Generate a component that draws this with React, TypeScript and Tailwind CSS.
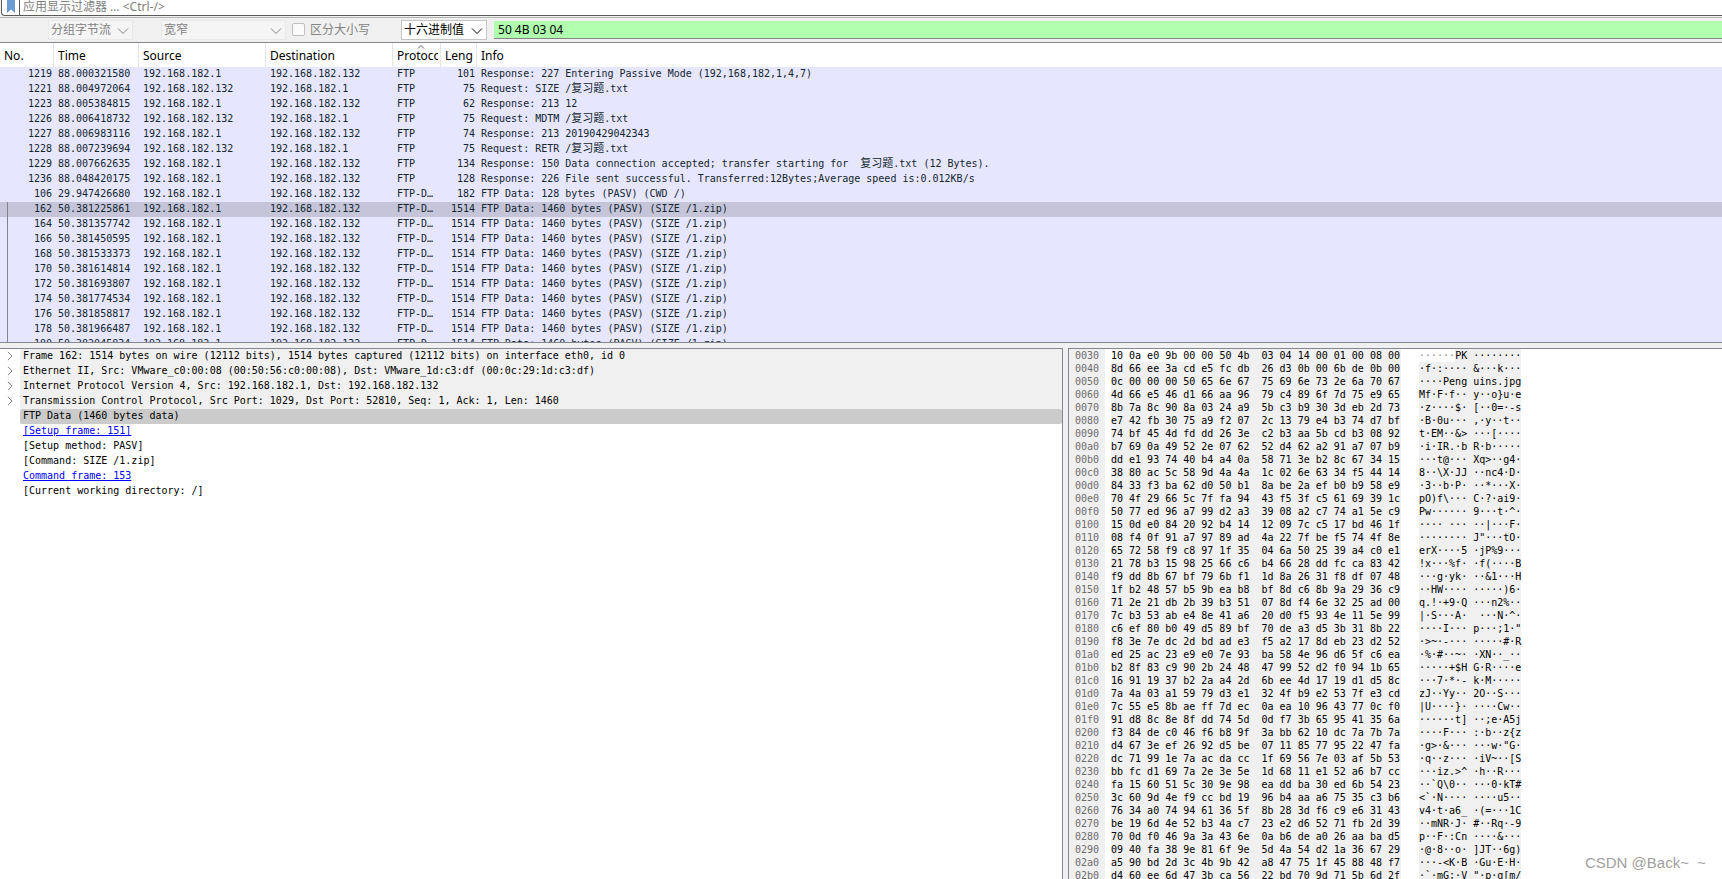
import React from 'react';
import { clsx } from 'clsx';

type Packet = [no: string, time: string, source: string, destination: string, protocol: string, length: string, info: string];

const HOST = '192.168.182.1';
const VM = '192.168.182.132';
const ZIP_INFO = 'FTP Data: 1460 bytes (PASV) (SIZE /1.zip)';

const packets: Packet[] = [
    ['1219', '88.000321580', HOST, VM, 'FTP', '101', 'Response: 227 Entering Passive Mode (192,168,182,1,4,7)'],
    ['1221', '88.004972064', VM, HOST, 'FTP', '75', 'Request: SIZE /复习题.txt'],
    ['1223', '88.005384815', HOST, VM, 'FTP', '62', 'Response: 213 12'],
    ['1226', '88.006418732', VM, HOST, 'FTP', '75', 'Request: MDTM /复习题.txt'],
    ['1227', '88.006983116', HOST, VM, 'FTP', '74', 'Response: 213 20190429042343'],
    ['1228', '88.007239694', VM, HOST, 'FTP', '75', 'Request: RETR /复习题.txt'],
    ['1229', '88.007662635', HOST, VM, 'FTP', '134', 'Response: 150 Data connection accepted; transfer starting for  复习题.txt (12 Bytes).'],
    ['1236', '88.048420175', HOST, VM, 'FTP', '128', 'Response: 226 File sent successful. Transferred:12Bytes;Average speed is:0.012KB/s'],
    ['106', '29.947426680', HOST, VM, 'FTP-D…', '182', 'FTP Data: 128 bytes (PASV) (CWD /)'],
    ['162', '50.381225861', HOST, VM, 'FTP-D…', '1514', ZIP_INFO],
    ['164', '50.381357742', HOST, VM, 'FTP-D…', '1514', ZIP_INFO],
    ['166', '50.381450595', HOST, VM, 'FTP-D…', '1514', ZIP_INFO],
    ['168', '50.381533373', HOST, VM, 'FTP-D…', '1514', ZIP_INFO],
    ['170', '50.381614814', HOST, VM, 'FTP-D…', '1514', ZIP_INFO],
    ['172', '50.381693807', HOST, VM, 'FTP-D…', '1514', ZIP_INFO],
    ['174', '50.381774534', HOST, VM, 'FTP-D…', '1514', ZIP_INFO],
    ['176', '50.381858817', HOST, VM, 'FTP-D…', '1514', ZIP_INFO],
    ['178', '50.381966487', HOST, VM, 'FTP-D…', '1514', ZIP_INFO],
    ['180', '50.382045834', HOST, VM, 'FTP-D…', '1514', ZIP_INFO],
];

const SELECTED = '162';

const columns = [
    { label: 'No.', width: 'w-[54px]' },
    { label: 'Time', width: 'w-[85px]' },
    { label: 'Source', width: 'w-[127px]' },
    { label: 'Destination', width: 'w-[127px]' },
    { label: 'Protoco', width: 'w-[48px]', sorted: true },
    { label: 'Leng', width: 'w-[36px]' },
    { label: 'Info', width: '' },
];

const layers = [
    'Frame 162: 1514 bytes on wire (12112 bits), 1514 bytes captured (12112 bits) on interface eth0, id 0',
    'Ethernet II, Src: VMware_c0:00:08 (00:50:56:c0:00:08), Dst: VMware_1d:c3:df (00:0c:29:1d:c3:df)',
    'Internet Protocol Version 4, Src: 192.168.182.1, Dst: 192.168.182.132',
    'Transmission Control Protocol, Src Port: 1029, Dst Port: 52810, Seq: 1, Ack: 1, Len: 1460',
];

const fields = [
    { text: '[Setup frame: 151]', link: true },
    { text: '[Setup method: PASV]' },
    { text: '[Command: SIZE /1.zip]' },
    { text: 'Command frame: 153', link: true },
    { text: '[Current working directory: /]' },
];

const FIRST_OFFSET = 0x30;
// the first bytes on screen still belong to the TCP header
const HEADER_BYTES = 6;

const dump = `
10 0a e0 9b 00 00 50 4b 03 04 14 00 01 00 08 00
8d 66 ee 3a cd e5 fc db 26 d3 0b 00 6b de 0b 00
0c 00 00 00 50 65 6e 67 75 69 6e 73 2e 6a 70 67
4d 66 e5 46 d1 66 aa 96 79 c4 89 6f 7d 75 e9 65
8b 7a 8c 90 8a 03 24 a9 5b c3 b9 30 3d eb 2d 73
e7 42 fb 30 75 a9 f2 07 2c 13 79 e4 b3 74 d7 bf
74 bf 45 4d fd dd 26 3e c2 b3 aa 5b cd b3 08 92
b7 69 0a 49 52 2e 07 62 52 d4 62 a2 91 a7 07 b9
dd e1 93 74 40 b4 a4 0a 58 71 3e b2 8c 67 34 15
38 80 ac 5c 58 9d 4a 4a 1c 02 6e 63 34 f5 44 14
84 33 f3 ba 62 d0 50 b1 8a be 2a ef b0 b9 58 e9
70 4f 29 66 5c 7f fa 94 43 f5 3f c5 61 69 39 1c
50 77 ed 96 a7 99 d2 a3 39 08 a2 c7 74 a1 5e c9
15 0d e0 84 20 92 b4 14 12 09 7c c5 17 bd 46 1f
08 f4 0f 91 a7 97 89 ad 4a 22 7f be f5 74 4f 8e
65 72 58 f9 c8 97 1f 35 04 6a 50 25 39 a4 c0 e1
21 78 b3 15 98 25 66 c6 b4 66 28 dd fc ca 83 42
f9 dd 8b 67 bf 79 6b f1 1d 8a 26 31 f8 df 07 48
1f b2 48 57 b5 9b ea b8 bf 8d c6 8b 9a 29 36 c9
71 2e 21 db 2b 39 b3 51 07 8d f4 6e 32 25 ad 00
7c b3 53 ab e4 8e 41 a6 20 d0 f5 93 4e 11 5e 99
c6 ef 80 b0 49 d5 89 bf 70 de a3 d5 3b 31 8b 22
f8 3e 7e dc 2d bd ad e3 f5 a2 17 8d eb 23 d2 52
ed 25 ac 23 e9 e0 7e 93 ba 58 4e 96 d6 5f c6 ea
b2 8f 83 c9 90 2b 24 48 47 99 52 d2 f0 94 1b 65
16 91 19 37 b2 2a a4 2d 6b ee 4d 17 19 d1 d5 8c
7a 4a 03 a1 59 79 d3 e1 32 4f b9 e2 53 7f e3 cd
7c 55 e5 8b ae ff 7d ec 0a ea 10 96 43 77 0c f0
91 d8 8c 8e 8f dd 74 5d 0d f7 3b 65 95 41 35 6a
f3 84 de c0 46 f6 b8 9f 3a bb 62 10 dc 7a 7b 7a
d4 67 3e ef 26 92 d5 be 07 11 85 77 95 22 47 fa
dc 71 99 1e 7a ac da cc 1f 69 56 7e 03 af 5b 53
bb fc d1 69 7a 2e 3e 5e 1d 68 11 e1 52 a6 b7 cc
fa 15 60 51 5c 30 9e 98 ea dd ba 30 ed 6b 54 23
3c 60 9d 4e f9 cc bd 19 96 b4 aa a6 75 35 c3 b6
76 34 a0 74 94 61 36 5f 8b 28 3d f6 c9 e6 31 43
be 19 6d 4e 52 b3 4a c7 23 e2 d6 52 71 fb 2d 39
70 0d f0 46 9a 3a 43 6e 0a b6 de a0 26 aa ba d5
09 40 fa 38 9e 81 6f 9e 5d 4a 54 d2 1a 36 67 29
a5 90 bd 2d 3c 4b 9b 42 a8 47 75 1f 45 88 48 f7
d4 60 ee 6d 47 3b ca 56 22 bd 70 9d 71 5b 6d 2f
`.trim().split('\n').map((line) => line.split(' '));

function toChar(byte: string) {
    const code = parseInt(byte, 16);
    return code >= 0x20 && code < 0x7f ? String.fromCharCode(code) : '·';
}

function Chevron({ className }: { className?: string }) {
    return (
        <svg viewBox="0 0 12 12" className={clsx('shrink-0', className)} fill="none" stroke="currentColor" aria-hidden="true">
            <path d="M1 3.5 L6 8.5 L11 3.5" />
        </svg>
    );
}

interface SearchSelectProps {
    label: string;
    value: string;
    className: string;
    disabled?: boolean;
}

function SearchSelect({ label, value, className, disabled }: SearchSelectProps) {
    return (
        <div
            className={clsx(
                'relative flex h-5 shrink-0 items-center border',
                disabled ? 'border-[#e9e9e9] bg-[#f5f5f5] text-[#838383]' : 'border-[#c4c4c4] bg-white text-black',
                className,
            )}
        >
            <select aria-label={label} disabled={disabled} className="h-full w-full appearance-none bg-transparent pl-[2px] text-xs opacity-100">
                <option>{value}</option>
            </select>
            <Chevron className="pointer-events-none absolute right-[3px] top-[4px] h-3 w-3" />
        </div>
    );
}

function FilterBar() {
    return (
        <div className="h-[18px] shrink-0 border-b border-[#b4b4b4] bg-[#f0f0f0] pl-px">
            <div className="flex h-4 items-start rounded-bl-sm border-b border-l border-[#5a5a5a] bg-white">
                <button type="button" aria-label="书签" className="flex h-[15px] w-[18px] shrink-0 justify-center border-r border-[#5a5a5a]">
                    <svg viewBox="0 0 8 13" className="h-[13px] w-2" aria-hidden="true">
                        <path d="M0 0 H8 V13 L4 9.5 L0 13 Z" fill="#6c9bd2" />
                    </svg>
                </button>
                <input
                    aria-label="显示过滤器"
                    placeholder="应用显示过滤器 … <Ctrl-/>"
                    className="h-[14px] min-w-0 flex-1 pl-[3px] text-xs leading-[14px] outline-none placeholder:text-[#808080]"
                />
            </div>
        </div>
    );
}

function SearchBar() {
    return (
        <div className="flex h-[25px] shrink-0 items-center border-b border-[#828790] bg-[#f0f0f0] pb-px pl-12">
            <SearchSelect label="搜索范围" value="分组字节流" className="w-[85px]" disabled />
            <SearchSelect label="字符宽度" value="宽窄" className="ml-7 w-[125px]" disabled />
            <label className="ml-[6px] flex shrink-0 items-center gap-[5px] text-xs text-[#838383]">
                <input type="checkbox" disabled className="h-[13px] w-[13px] appearance-none rounded-xs border border-[#bfbfbf] bg-[#fbfbfb]" />
                区分大小写
            </label>
            <SearchSelect label="搜索类型" value="十六进制值" className="ml-[31px] w-[86px]" />
            <input
                aria-label="搜索内容"
                defaultValue="50 4B 03 04"
                className="ml-[7px] h-[18px] min-w-0 flex-1 border-b border-[#868686] bg-[#afffaf] pl-[4px] text-xs text-black outline-none"
            />
        </div>
    );
}

// Chinese file names are set one size larger than the monospaced text
function InfoText({ text }: { text: string }) {
    return (
        <>
            {text.split(/([\u4e00-\u9fff]+)/).map((part, i) => (
                i % 2 ? <span key={i} className="text-[11px]">{part}</span> : part
            ))}
        </>
    );
}

function PacketList() {
    return (
        <div className="h-[300px] shrink-0 overflow-hidden border-b border-[#828790] bg-[#e7e6ff]">
            <table className="w-full table-fixed border-separate border-spacing-0">
                <colgroup>
                    {columns.map((column) => (
                        <col key={column.label} className={column.width} />
                    ))}
                </colgroup>
                <thead className="bg-white text-xs">
                    <tr className="h-6">
                        {columns.map((column) => (
                            <th
                                key={column.label}
                                aria-sort={column.sorted ? 'ascending' : undefined}
                                className="relative whitespace-nowrap border-r border-[#e5e5e5] p-0 pl-[4px] pr-[2px] pt-[2px] text-left font-normal last:border-r-0"
                            >
                                {column.sorted && (
                                    <svg viewBox="0 0 8 4" className="absolute left-[24px] top-[2px] h-1 w-2" fill="none" stroke="#5c5c5c" aria-hidden="true">
                                        <path d="M1 3.5 L4 0.5 L7 3.5" />
                                    </svg>
                                )}
                                <span className="block overflow-hidden">{column.label}</span>
                            </th>
                        ))}
                    </tr>
                </thead>
                <tbody className="font-['DejaVu_Sans_Mono','Noto_Sans_CJK_SC',monospace] text-[10px] leading-[13px] text-[#12272e]">
                    {packets.map(([no, time, source, destination, protocol, length, info], index) => (
                        <tr key={no} className={clsx('h-[15px] whitespace-pre align-top', no === SELECTED && 'bg-[#c6c4d9]')}>
                            <td className="p-0">
                                <div className="flex h-[15px] pl-[7px]">
                                    {/* conversation marker */}
                                    <span className={clsx('w-px', index >= 9 && 'bg-[#83838f]')} />
                                    <span className="flex-1 pr-[2px] text-right">{no}</span>
                                </div>
                            </td>
                            <td className="p-0 pl-[4px]">{time}</td>
                            <td className="p-0 pl-[4px]">{source}</td>
                            <td className="p-0 pl-[4px]">{destination}</td>
                            <td className="p-0 pl-[4px]">{protocol}</td>
                            <td className="p-0 pr-[2px] text-right">{length}</td>
                            <td className="p-0 pl-[4px]">
                                <div className="h-[15px] overflow-hidden"><InfoText text={info} /></div>
                            </td>
                        </tr>
                    ))}
                </tbody>
            </table>
        </div>
    );
}

function PacketDetails() {
    return (
        <div className="min-w-0 flex-1 overflow-hidden border-r border-t border-[#828790] bg-white text-[10px] leading-[14px] text-black">
            {layers.map((layer) => (
                <div key={layer} className="flex h-[15px] items-start">
                    <button type="button" aria-label="展开" className="flex h-[14px] w-5 shrink-0 items-center justify-center text-[#6a6a6a]">
                        <Chevron className="h-[10px] w-[10px] -rotate-90" />
                    </button>
                    <div className="h-[15px] flex-1 whitespace-nowrap bg-[#f0f0f0] pl-[3px]">{layer}</div>
                </div>
            ))}
            <div className="ml-5 h-[15px] whitespace-nowrap rounded-xs bg-[#cbcbcb] pl-[3px]">FTP Data (1460 bytes data)</div>
            {fields.map((field) => (
                <div key={field.text} className="h-[15px] whitespace-nowrap pl-[23px]">
                    {field.link ? (
                        <a href="#frame" className="text-[#0000ff] underline">{field.text}</a>
                    ) : (
                        field.text
                    )}
                </div>
            ))}
        </div>
    );
}

function HexRow({ bytes, index }: { bytes: string[]; index: number }) {
    const offset = (FIRST_OFFSET + index * 16).toString(16).padStart(4, '0');
    const split = index === 0 ? HEADER_BYTES : 0;
    // one extra space between the two groups of eight
    const hex = bytes.map((byte, i) => byte + (i === 15 ? '' : i === 7 ? '  ' : ' '));
    const chars = bytes.map((byte, i) => toChar(byte) + (i === 7 ? ' ' : ''));

    return (
        <div className="flex h-[13px] whitespace-pre">
            <span className="w-9 shrink-0 bg-[#f0f0f0] pl-[6px] text-[#6e6e6e]">{offset}</span>
            <span className="ml-[6px]">{hex.slice(0, split).join('')}</span>
            <span className="bg-[#f0f0f0] pr-px">{hex.slice(split).join('')}</span>
            <span className="ml-[18px] text-[#8c8c8c]">{chars.slice(0, split).join('')}</span>
            <span className="bg-[#f0f0f0]">{chars.slice(split).join('')}</span>
        </div>
    );
}

function PacketBytes() {
    return (
        <div className="min-w-0 flex-1 overflow-hidden border-l border-t border-[#828790] bg-white text-[10px] leading-[13px] text-black">
            {dump.map((bytes, index) => (
                <HexRow key={index} bytes={bytes} index={index} />
            ))}
        </div>
    );
}

export default function App() {
    return (
        <div className="relative flex h-screen flex-col overflow-hidden bg-[#f0f0f0] font-['Noto_Sans','Noto_Sans_CJK_SC',sans-serif] text-black">
            <FilterBar />
            <SearchBar />
            <PacketList />
            <div className="mt-[5px] flex min-h-0 flex-1 gap-[5px] font-['DejaVu_Sans_Mono','Noto_Sans_CJK_SC',monospace]">
                <div className="flex min-w-0 flex-[1063]">
                    <PacketDetails />
                </div>
                <div className="flex min-w-0 flex-[654]">
                    <PacketBytes />
                </div>
            </div>
            <div className="absolute bottom-[7px] right-4 whitespace-pre font-['Liberation_Sans',sans-serif] text-[15px] leading-[18px] text-[#a0a0a0]">
                CSDN @Back~  ~
            </div>
        </div>
    );
}
